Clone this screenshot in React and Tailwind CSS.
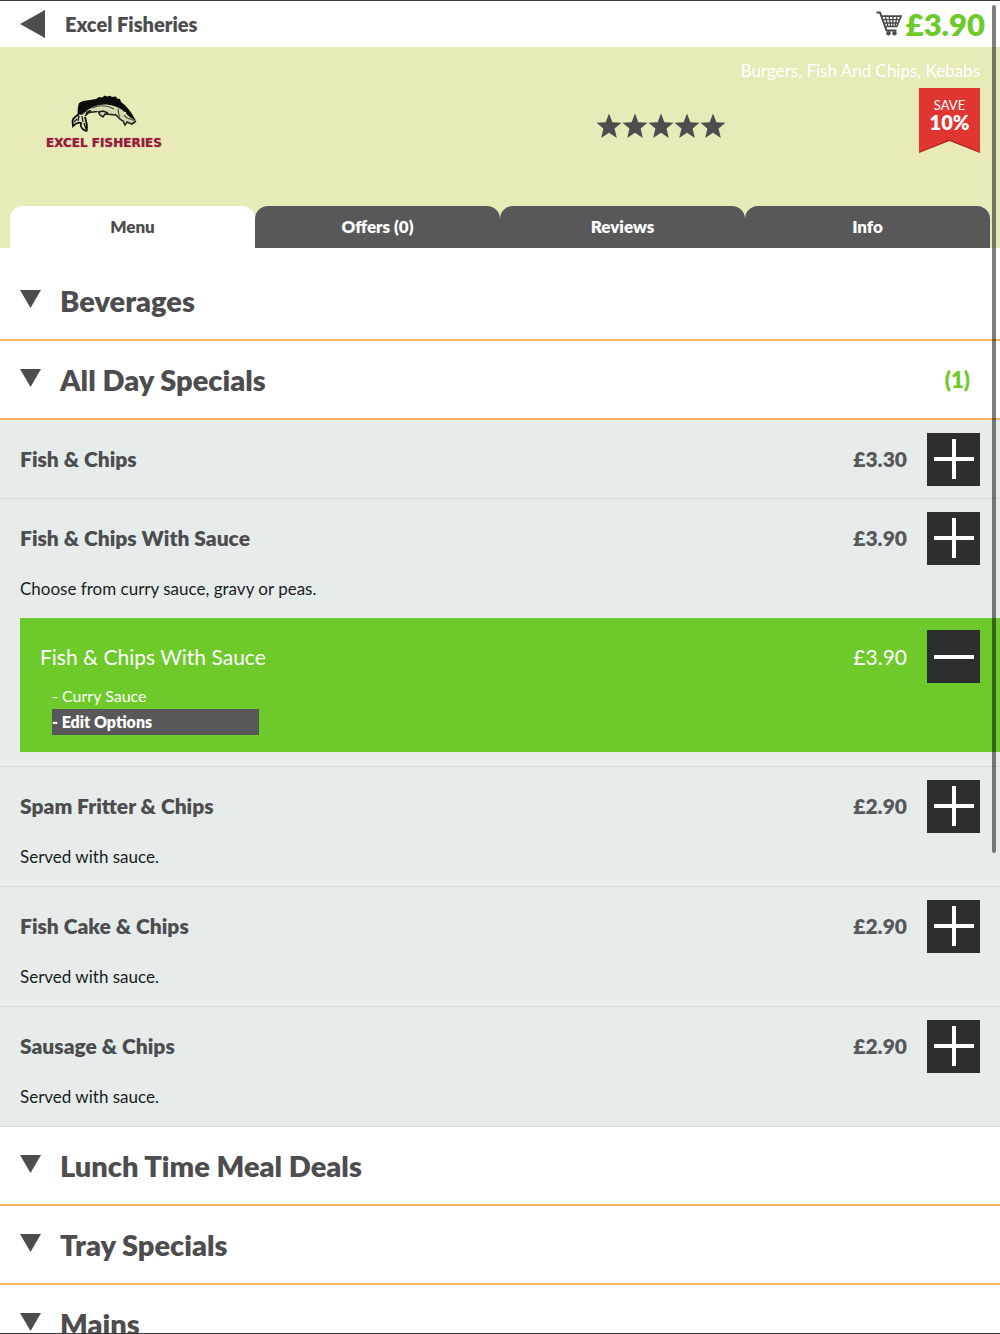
import { useState } from 'react';

const tabs = ['Menu', 'Offers (0)', 'Reviews', 'Info'];

const specials = [
    { name: 'Fish & Chips', price: '£3.30' },
    {
        name: 'Fish & Chips With Sauce',
        price: '£3.90',
        description: 'Choose from curry sauce, gravy or peas.',
        chosen: { name: 'Fish & Chips With Sauce', price: '£3.90', option: 'Curry Sauce' },
    },
    { name: 'Spam Fritter & Chips', price: '£2.90', description: 'Served with sauce.' },
    { name: 'Fish Cake & Chips', price: '£2.90', description: 'Served with sauce.' },
    { name: 'Sausage & Chips', price: '£2.90', description: 'Served with sauce.' },
];

const CartIcon = () => (
    <svg className="h-[26px] w-[26px]" viewBox="0 0 26 26" fill="none" stroke="#4a4a4a" aria-hidden="true">
        <path d="M0.5 1.5H4L10.5 19.5H20.5" strokeWidth="2" />
        <path d="M5 5.2H25L20.8 15.5H9" strokeWidth="1.7" />
        <path d="M6.5 8.6H23.5M8 12H22M9.3 5.5L12 15.5M13.2 5.5L14.6 15.5M17 5.5L16.8 15.5M21 5.5L19 15.5" strokeWidth="1.3" />
        <circle cx="12.5" cy="22.3" r="2.2" fill="#4a4a4a" stroke="none" />
        <circle cx="18.5" cy="22.3" r="2.2" fill="#4a4a4a" stroke="none" />
    </svg>
);

const FishLogo = () => (
    <svg className="h-[38px] w-[66px]" viewBox="0 0 66 38" aria-hidden="true">
        <path d="M8 18C14 10 27 6 39 9C50 12 54 19 65 26L62 29L52 26L45 20L36 18L32 21L26 16L18 17L13 21L8 22Z" fill="#d6d8ae" />
        <path d="M7 21C6 16 7 11 8 8L12 6L19 5L25 4L28 2L31 2.5L34 0.5L36 1.5L39 0.8L41 2L45 1.5L46 3.5L49 4L50 7C56 11 61 18 65 26L60 23C55 19 51 13 43 11C31 7 20 11 12 19Z" fill="#0c0c0a" />
        <path d="M8 19C5 22 2 22 1.5 26L2 31C4 29 7 27 10 28C9 32 12 35 15.5 36C17 31 15 26 14 22" fill="#e2e4b8" stroke="#0c0c0a" strokeWidth="1.8" />
        <path d="M8 21L7 26M11 21L12 27M13 28L15 34M3 27L6 24" stroke="#22221b" strokeWidth="1.4" />
        <path d="M14 21L18 17.5L26 16.5M15 20L16 17L20 15.5M27 16L29 20L32 22L34 19L40 19.5L44 20M28 17L32 16L37 18M44 19C47 22 49 25 52 26L54 30L56 27L61 29L65 26" fill="none" stroke="#22221b" strokeWidth="1.6" />
        <path d="M47 14C48 17 47 20 49 22M53 20L56 23L63 25.5M21 13C28 10 36 10 43 14" fill="none" stroke="#4b4b3c" strokeWidth="1.1" />
        <circle cx="54" cy="18" r="1.2" fill="#e8eab8" />
    </svg>
);

const Star = () => (
    <svg className="h-[26px] w-[26px]" viewBox="0 0 26 26" aria-hidden="true">
        <path d="M13 0.5L16.4 9.2L25.5 9.8L18.6 15.6L20.8 25L13 19.8L5.2 25L7.4 15.6L0.5 9.8L9.6 9.2Z" fill="#4d4d4f" />
    </svg>
);

const SquareButton = ({ minus, label, onClick }) => (
    <button type="button" aria-label={label} onClick={onClick} className="flex size-[53px] shrink-0 items-center justify-center bg-[#2d2e2e]">
        <svg className="size-[40px]" viewBox="0 0 40 40" stroke="#fff" strokeWidth="4" aria-hidden="true">
            <path d={minus ? 'M0 20H40' : 'M0 20H40M20 0V40'} />
        </svg>
    </button>
);

const Category = ({ title, count, first }) => (
    <h2 className={first ? 'border-b-2 border-[#fbb55c] pt-[14px]' : 'border-b-2 border-[#fbb55c]'}>
        <button type="button" className="flex h-[77px] w-full items-center pr-[30px] pl-5 text-left">
            <svg className="mb-1 h-[18px] w-[21px]" viewBox="0 0 21 18" aria-hidden="true">
                <path d="M0 0H21L10.5 18Z" fill="#4d4d4f" />
            </svg>
            <span className="ml-[19px] flex-1 text-[29px] font-extrabold">{title}</span>
            {count && <span className="text-[22px] font-extrabold text-[#6ec92b]">({count})</span>}
        </button>
    </h2>
);

const MenuItem = ({ item }) => {
    const { name, price, description, chosen } = item;

    return (
        <li className="border-b border-[#d9dcdd] bg-[#e6ecec]">
            <div className="flex h-[78px] items-center px-5">
                <h3 className="flex-1 text-[21px] font-extrabold">{name}</h3>
                <span className="mr-5 text-[21px] font-extrabold text-[#58585a]">{price}</span>
                <SquareButton label={`Add ${name}`} />
            </div>
            {description && <p className="px-5 pb-[17px] text-[17px] leading-6 text-[#1b1b1b]">{description}</p>}
            {chosen && (
                <div className="mb-[14px] ml-5 bg-[#6ec92b] pb-[17px] text-white">
                    <div className="flex items-center px-5 pt-3">
                        <span className="flex-1 text-[21px]">{chosen.name}</span>
                        <span className="mr-5 text-[21px]">{chosen.price}</span>
                        <SquareButton minus label={`Remove ${chosen.name}`} />
                    </div>
                    <div className="ml-8 w-[207px] text-[16px] leading-[26px]">
                        <p>- {chosen.option}</p>
                        <button type="button" className="block w-full bg-[#58585a] text-left font-extrabold">- Edit Options</button>
                    </div>
                </div>
            )}
        </li>
    );
};

const App = () => {
    const [activeTab, setActiveTab] = useState('Menu');

    return (
        <div className="relative h-screen overflow-hidden border-y border-[#3a3a3c] bg-white font-['Lato',sans-serif] text-[#4d4d4f]">
            <header className="flex h-[46px] items-center pr-[15px] pl-5">
                <button type="button" aria-label="Back">
                    <svg className="h-[28px] w-[25px]" viewBox="0 0 25 28" aria-hidden="true">
                        <path d="M25 0V28L0 14Z" fill="#4d4d4f" />
                    </svg>
                </button>
                <h1 className="ml-5 flex-1 text-[20px] font-extrabold">Excel Fisheries</h1>
                <a href="#basket" className="flex items-center gap-1">
                    <CartIcon />
                    <span className="text-[31px] leading-[46px] font-extrabold text-[#6ec92b]">£3.90</span>
                </a>
            </header>

            <section className="flex h-[201px] flex-col bg-[#e8eab8]">
                <p className="px-5 pt-3 text-right text-[17px] leading-6 text-white">Burgers, Fish And Chips, Kebabs</p>
                <div className="flex flex-1 items-start pr-5 pl-[44px]">
                    <div className="mt-3 flex w-[120px] flex-col items-center">
                        <FishLogo />
                        <span className="pt-0.5 font-['DejaVu_Sans',sans-serif] text-[12px] leading-4 font-bold whitespace-nowrap text-[#a3173f] [text-shadow:0_0_1px_#5b5b5b]">EXCEL FISHERIES</span>
                    </div>
                    <div className="flex flex-1 justify-center pt-[30px] pl-[238px]" role="img" aria-label="5 stars">
                        {[1, 2, 3, 4, 5].map((n) => (
                            <Star key={n} />
                        ))}
                    </div>
                    <div className="relative mt-[5px] h-[65px] w-[61px] text-center text-white">
                        <svg className="absolute inset-0 h-full w-full" viewBox="0 0 61 65" aria-hidden="true">
                            <path d="M0 0H61V65L30.5 53L0 65Z" fill="#a92522" />
                            <path d="M0 0H61V64L30.5 51.5L0 64Z" fill="#e03530" />
                        </svg>
                        <div className="relative pt-[10px]">
                            <p className="text-[13px] leading-[14px]">SAVE</p>
                            <p className="text-[20px] leading-5 font-extrabold">10%</p>
                        </div>
                    </div>
                </div>
                <nav className="flex px-[10px]">
                    {tabs.map((tab) => (
                        <button
                            key={tab}
                            type="button"
                            onClick={() => setActiveTab(tab)}
                            className={tab === activeTab
                                ? 'h-[42px] flex-1 rounded-t-[13px] bg-white text-[17px] font-extrabold'
                                : 'h-[42px] flex-1 rounded-t-[13px] bg-[#58585a] text-[17px] font-extrabold text-white'}
                        >
                            {tab}
                        </button>
                    ))}
                </nav>
            </section>

            <main>
                <Category title="Beverages" first />
                <Category title="All Day Specials" count={1} />
                <ul>
                    {specials.map((item) => (
                        <MenuItem key={item.name} item={item} />
                    ))}
                </ul>
                <Category title="Lunch Time Meal Deals" />
                <Category title="Tray Specials" />
                <Category title="Mains" />
            </main>

            <div className="absolute top-1 right-1 h-[848px] w-1 rounded-full bg-black/50" />
        </div>
    );
};

export default App;
